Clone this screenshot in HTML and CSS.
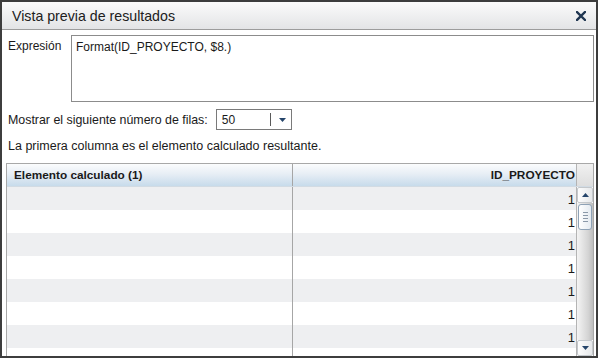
FILE: index.html
```html
<!DOCTYPE html>
<html lang="es">
<head>
  <meta charset="UTF-8">
  <title>Vista previa de resultados</title>
  <link rel="stylesheet" href="styles.css">
</head>
<body>
  <div class="Window">
    <header class="TitleBar">
      <span class="TitleText">Vista previa de resultados</span>
      <svg class="CloseIcon" width="10" height="10" viewBox="0 0 10 10">
        <path d="M1 1 L9 9 M9 1 L1 9" stroke="#1f3550" stroke-width="2.4" stroke-linecap="square"/>
      </svg>
    </header>

    <main class="Content">
      <div class="ExprRow">
        <label class="ExprLabel">Expresión</label>
        <div class="ExprBox">Format(ID_PROYECTO, $8.)</div>
      </div>

      <div class="RowsLine">
        <span>Mostrar el siguiente número de filas:</span>
        <div class="Combo">
          <span class="ComboValue">50</span>
          <span class="ComboSep"></span>
          <svg class="ComboArrow" width="7" height="4" viewBox="0 0 7 4">
            <path d="M0 0 H7 L3.5 4 Z" fill="#24446a"/>
          </svg>
        </div>
      </div>

      <p class="Note">La primera columna es el elemento calculado resultante.</p>

      <div class="Table">
        <div class="TableHead">
          <div class="HeadCell first">Elemento calculado (1)</div>
          <div class="HeadCell second">ID_PROYECTO</div>
          <div class="HeadCorner"></div>
        </div>
        <div class="TableBody">
          <div class="Rows">
            <div class="Row"><div class="Cell first"></div><div class="Cell second">1</div></div>
            <div class="Row"><div class="Cell first"></div><div class="Cell second">1</div></div>
            <div class="Row"><div class="Cell first"></div><div class="Cell second">1</div></div>
            <div class="Row"><div class="Cell first"></div><div class="Cell second">1</div></div>
            <div class="Row"><div class="Cell first"></div><div class="Cell second">1</div></div>
            <div class="Row"><div class="Cell first"></div><div class="Cell second">1</div></div>
            <div class="Row"><div class="Cell first"></div><div class="Cell second">1</div></div>
            <div class="Row"><div class="Cell first"></div><div class="Cell second">1</div></div>
          </div>
          <div class="ScrollBar">
            <div class="ScrollBtn">
              <svg width="7" height="4" viewBox="0 0 7 4"><path d="M0 4 H7 L3.5 0 Z" fill="#24446a"/></svg>
            </div>
            <div class="ScrollTrack">
              <div class="ScrollThumb">
                <span></span><span></span><span></span><span></span>
              </div>
            </div>
            <div class="ScrollBtn">
              <svg width="7" height="4" viewBox="0 0 7 4"><path d="M0 0 H7 L3.5 4 Z" fill="#24446a"/></svg>
            </div>
          </div>
        </div>
      </div>
    </main>
  </div>
</body>
</html>
```

FILE: styles.css
```css
* {
  margin: 0;
  padding: 0;
  box-sizing: border-box;
}

body {
  font-family: 'Liberation Sans', Arial, sans-serif;
  font-size: 12px;
  color: #1a1a1a;
  background: #fff;
}

/* Window frame */
.Window {
  width: 598px;
  height: 358px;
  border: 2px solid #3d3d3d;
  background: #fff;
  display: flex;
  flex-direction: column;
  overflow: hidden;
}

.TitleBar {
  height: 28px;
  flex: none;
  display: flex;
  align-items: center;
  justify-content: space-between;
  padding: 0 10px 0 10px;
  background: linear-gradient(#fbfbfb, #e3e4e6);
  border-bottom: 1px solid #9c9c9c;
}

.TitleText {
  font-size: 14.2px;
  color: #202020;
}

.CloseIcon {
  margin-top: 1px;
}

/* Content */
.Content {
  flex: 1;
  display: flex;
  flex-direction: column;
  padding: 5px 2px 0 4px;
  min-height: 0;
}

.ExprRow {
  display: flex;
}

.ExprLabel {
  width: 65px;
  padding: 4px 0 0 2px;
}

.ExprBox {
  flex: 1;
  height: 67px;
  border: 1px solid #8c8c8c;
  padding: 4px 4px;
}

.RowsLine {
  display: flex;
  align-items: center;
  gap: 8px;
  margin-top: 7px;
  padding-left: 2px;
  font-size: 12.4px;
}

.Combo {
  width: 76px;
  height: 21px;
  border: 1px solid #7a7a7a;
  display: flex;
  align-items: center;
  padding-left: 5px;
  font-size: 12px;
}

.ComboValue {
  width: 48px;
}

.ComboSep {
  width: 1px;
  height: 13px;
  background: #5a5a5a;
}

.ComboArrow {
  margin-left: 8px;
}

.Note {
  margin-top: 9px;
  padding-left: 2px;
  line-height: 14px;
  font-size: 12.5px;
}

/* Table */
.Table {
  margin-top: 10px;
  flex: 1;
  min-height: 0;
  border: 1px solid #a8a8a8;
  border-bottom: none;
  display: flex;
  flex-direction: column;
}

.TableHead {
  height: 23px;
  flex: none;
  display: flex;
  background: linear-gradient(#fbfcfd, #e7eef5 45%, #c7dbeb);
  border-bottom: 1px solid #d2dbe3;
}

.HeadCell {
  font-weight: bold;
  font-size: 11.8px;
  display: flex;
  align-items: center;
  padding: 0 7px;
}

.first {
  width: 286px;
  border-right: 1px solid #a6a6a6;
}

.second {
  flex: 1;
  justify-content: flex-end;
  padding-right: 1px;
}

.HeadCell.second {
  padding-right: 1px;
}

.HeadCorner {
  width: 17px;
  border-left: 1px solid #b4b4b4;
  background: linear-gradient(#f1f1f1, #dedede);
}

.TableBody {
  flex: 1;
  min-height: 0;
  display: flex;
}

.Rows {
  flex: 1;
  overflow: hidden;
}

.Row {
  height: 23px;
  display: flex;
}

.Row:nth-child(odd) {
  background: #eeeff1;
}

.Cell {
  display: flex;
  align-items: center;
  padding-top: 1px;
  font-size: 13px;
}

.Cell.second {
  padding-right: 1px;
}

.ScrollBar {
  width: 17px;
  display: flex;
  flex-direction: column;
  border-left: 1px solid #b4b4b4;
}

.ScrollBtn {
  height: 16px;
  display: flex;
  align-items: center;
  justify-content: center;
  background: linear-gradient(90deg, #fdfdfd, #e6e8ea);
  border: 1px solid #c4c8cc;
  border-radius: 2px;
}

.ScrollTrack {
  flex: 1;
  background: linear-gradient(90deg, #f4f4f4, #d4d4d4 70%, #bdbdbd);
  padding-top: 1px;
}

.ScrollThumb {
  height: 26px;
  margin: 0 1px;
  border: 1px solid #8ea2b6;
  border-radius: 3px;
  background: linear-gradient(90deg, #ffffff, #e4eaf0);
  display: flex;
  flex-direction: column;
  align-items: center;
  justify-content: center;
  gap: 2px;
}

.ScrollThumb span {
  width: 5px;
  height: 1px;
  background: #8a98a8;
}
```
